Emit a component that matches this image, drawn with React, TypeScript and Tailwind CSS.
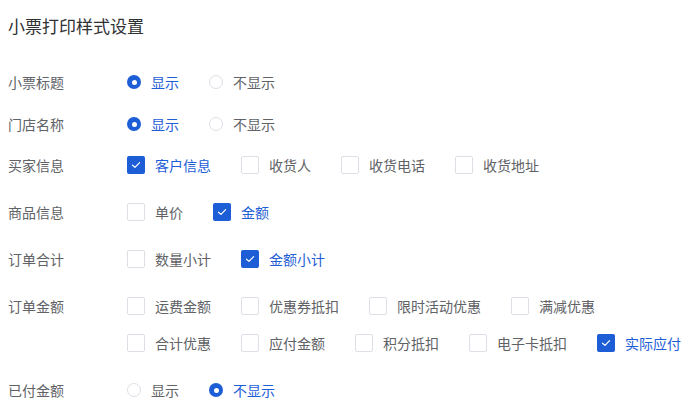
import React from "react";

const BLUE = "#1d5dd6";

function Radio({ label, checked }: { label: string; checked?: boolean }) {
  return (
    <div className="flex items-center gap-[10px]">
      {checked ? (
        <span className="flex h-[14px] w-[14px] items-center justify-center rounded-full bg-[#1d5dd6]">
          <span className="h-[5px] w-[5px] rounded-full bg-white" />
        </span>
      ) : (
        <span className="h-[14px] w-[14px] rounded-full border border-[#dcdfe6] bg-white" />
      )}
      <span className={checked ? "text-[#1d5dd6]" : "text-[#606266]"}>{label}</span>
    </div>
  );
}

function Check({ label, checked }: { label: string; checked?: boolean }) {
  return (
    <div className="flex items-center gap-[10px]">
      {checked ? (
        <span className="flex h-[18px] w-[18px] items-center justify-center rounded-[2px] bg-[#1d5dd6]">
          <svg width="10" height="8" viewBox="0 0 10 8" fill="none">
            <path d="M1.5 4.2 L4 6.4 L8.6 1.6" stroke="white" strokeWidth="1.2" strokeLinecap="round" strokeLinejoin="round" />
          </svg>
        </span>
      ) : (
        <span className="h-[18px] w-[18px] rounded-[2px] border border-[#dcdfe6] bg-white" />
      )}
      <span className={checked ? "text-[#1d5dd6]" : "text-[#606266]"}>{label}</span>
    </div>
  );
}

function Row({ label, children, className }: { label: string; children: React.ReactNode; className?: string }) {
  return (
    <div className={"flex " + (className ?? "")}>
      <div className="flex h-6 w-[119px] shrink-0 items-center text-[#606266]">{label}</div>
      <div className="flex flex-1 flex-wrap items-center gap-x-[30px] gap-y-[13px]">{children}</div>
    </div>
  );
}

export default function App() {
  return (
    <div
      className="h-[410px] w-[689px] bg-white pl-2 text-[14px] leading-6"
      style={{ fontFamily: '"Noto Sans CJK SC", "Noto Sans", sans-serif' }}
    >
      <div className="pt-[14px] text-[17px] leading-6 text-[#303133]">小票打印样式设置</div>
      <Row label="小票标题" className="mt-[32px]">
        <div className="flex h-6 items-center gap-x-[30px]">
          <Radio label="显示" checked />
          <Radio label="不显示" />
        </div>
      </Row>
      <Row label="门店名称" className="mt-[18px]">
        <div className="flex h-6 items-center gap-x-[30px]">
          <Radio label="显示" checked />
          <Radio label="不显示" />
        </div>
      </Row>
      <Row label="买家信息" className="mt-[17px]">
        <Check label="客户信息" checked />
        <Check label="收货人" />
        <Check label="收货电话" />
        <Check label="收货地址" />
      </Row>
      <Row label="商品信息" className="mt-[23px]">
        <Check label="单价" />
        <Check label="金额" checked />
      </Row>
      <Row label="订单合计" className="mt-[23px]">
        <Check label="数量小计" />
        <Check label="金额小计" checked />
      </Row>
      <Row label="订单金额" className="mt-[23px]">
        <Check label="运费金额" />
        <Check label="优惠券抵扣" />
        <Check label="限时活动优惠" />
        <Check label="满减优惠" />
        <Check label="合计优惠" />
        <Check label="应付金额" />
        <Check label="积分抵扣" />
        <Check label="电子卡抵扣" />
        <Check label="实际应付" checked />
      </Row>
      <Row label="已付金额" className="mt-[23px]">
        <div className="flex h-6 items-center gap-x-[30px]">
          <Radio label="显示" />
          <Radio label="不显示" checked />
        </div>
      </Row>
    </div>
  );
}
